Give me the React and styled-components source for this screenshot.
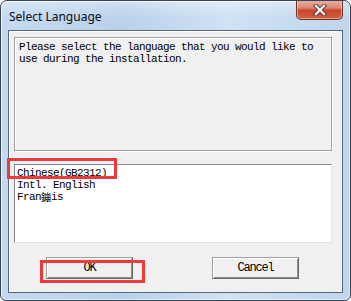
import styled, { createGlobalStyle } from "styled-components"

const Global = createGlobalStyle`
    html, body { margin: 0; padding: 0; background: #ffffff; }
    #root { width: 351px; height: 301px; }
`

const mono = `"Liberation Mono", "Noto Sans CJK SC", monospace`

const Win = styled.div`
    box-sizing: border-box;
    width: 351px;
    height: 301px;
    border: 1px solid #3b4350;
    border-radius: 7px 7px 6px 6px;
    background: linear-gradient(to right, #c4daf0 0%, #b9d1ea 35%, #d0e2f4 65%, #bed5ed 100%);
    box-shadow: inset 1px 1px 0 rgba(255,255,255,0.7), inset -1px -1px 0 rgba(255,255,255,0.5);
    display: flex;
    flex-direction: column;
    overflow: hidden;
`

const TitleBar = styled.div`
    height: 29px;
    display: flex;
    align-items: flex-start;
    justify-content: space-between;
    padding: 0 7px 0 8px;
    background: linear-gradient(to bottom, rgba(255,255,255,0.35), rgba(255,255,255,0) 60%);
`

const Title = styled.div`
    font-family: "Noto Sans", "Open Sans", sans-serif;
    font-size: 12px;
    color: #0b0b16;
    padding-top: 7px;
`

const CloseBtn = styled.div`
    box-sizing: border-box;
    width: 47px;
    height: 20px;
    margin-top: -1px;
    border: 1px solid #6e3128;
    border-top: none;
    border-radius: 0 0 5px 5px;
    background: linear-gradient(to bottom, #eab2a4 0%, #dc8a78 40%, #c8452e 55%, #d0603f 100%);
    box-shadow: inset 0 0 0 1px rgba(255,220,210,0.55);
    display: flex;
    align-items: center;
    justify-content: center;
`

const Client = styled.div`
    flex: 1;
    margin: 0 7px 7px 7px;
    border: 1px solid #56677c;
    background: #f0f0f0;
    box-shadow: inset 1px 1px 0 #ffffff;
    display: flex;
    flex-direction: column;
    padding: 6px 0 0 5px;
`

const Panel = styled.div`
    box-sizing: border-box;
    width: 318px;
    height: 114px;
    border: 1px solid #a0a0a0;
    box-shadow: inset 1px 1px 0 #ffffff, 1px 1px 0 #ffffff;
    padding: 3px 4px;
    font-family: ${mono};
    font-size: 11px;
    letter-spacing: -0.6px;
    line-height: 12px;
    color: #000;
    white-space: pre;
`

const ListWrap = styled.div`
    position: relative;
    margin-top: 13px;
    width: 318px;
`

const List = styled.div`
    box-sizing: border-box;
    width: 318px;
    height: 79px;
    background: #ffffff;
    border: 1px solid;
    border-color: #828790 #e3e3e3 #e3e3e3 #828790;
    padding: 2px 2px;
    font-family: ${mono};
    font-size: 11px;
    letter-spacing: -0.6px;
    line-height: 12px;
    color: #000;
`

const Item = styled.div`
    white-space: pre;
    height: 12px;
`

const Cjk = styled.span`
    display: inline-block;
    height: 12px;
    vertical-align: top;
    font-family: "Noto Sans CJK SC", sans-serif;
    font-size: 10px;
    line-height: 12px;
    letter-spacing: 0;
`

const Mark = styled.div`
    position: absolute;
    box-sizing: border-box;
    border: 3px solid #f03a3a;
    left: ${p => p.$l}px;
    top: ${p => p.$t}px;
    width: ${p => p.$w}px;
    height: ${p => p.$h}px;
    pointer-events: none;
`

const Buttons = styled.div`
    display: flex;
    margin-top: 14px;
    padding-left: 32px;
    gap: 79px;
`

const BtnWrap = styled.div`
    position: relative;
`

const Btn = styled.div`
    box-sizing: border-box;
    width: 87px;
    height: 22px;
    border: 1px solid;
    border-color: #a0a0a0 #696969 #696969 #a0a0a0;
    box-shadow: inset 1px 1px 0 #ffffff, inset -1px -1px 0 #8a8a8a;
    background: #f0f0f0;
    display: flex;
    align-items: center;
    justify-content: center;
    font-family: ${mono};
    font-size: 12px;
    letter-spacing: -1.2px;
    color: #000;
`

const CloseX = () => (
    <svg width="16" height="12" viewBox="0 0 16 12">
        <path d="M4 2 L12 10 M12 2 L4 10" stroke="#5a2a22" strokeWidth="4.2" strokeLinecap="square" />
        <path d="M4 2 L12 10 M12 2 L4 10" stroke="#ffffff" strokeWidth="2.4" strokeLinecap="square" />
    </svg>
)

const App = () => {
    return (
        <>
            <Global />
            <Win>
                <TitleBar>
                    <Title>Select Language</Title>
                    <CloseBtn><CloseX /></CloseBtn>
                </TitleBar>
                <Client>
                    <Panel>{"Please select the language that you would like to\nuse during the installation."}</Panel>
                    <ListWrap>
                        <List>
                            <Item>Chinese(GB2312)</Item>
                            <Item>Intl. English</Item>
                            <Item>Fran<Cjk>鏰</Cjk>is</Item>
                        </List>
                        <Mark $l={-7} $t={-6} $w={110} $h={21} />
                    </ListWrap>
                    <Buttons>
                        <BtnWrap>
                            <Btn>OK</Btn>
                            <Mark $l={-6} $t={3} $w={105} $h={23} />
                        </BtnWrap>
                        <BtnWrap>
                            <Btn>Cancel</Btn>
                        </BtnWrap>
                    </Buttons>
                </Client>
            </Win>
        </>
    )
}
export default App
